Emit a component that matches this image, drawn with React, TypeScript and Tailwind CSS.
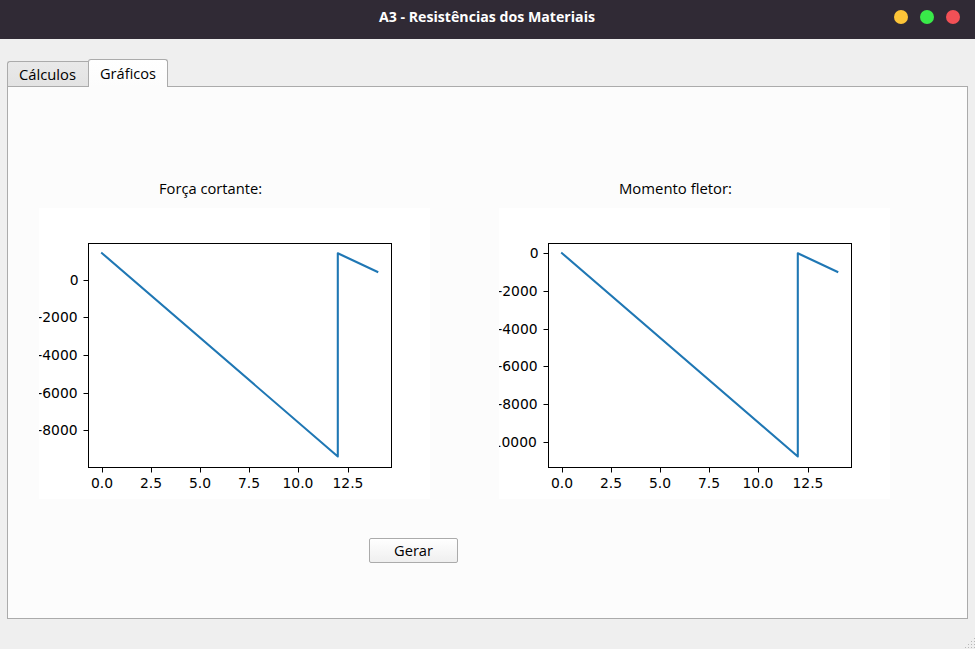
type Tick = { at: number; label: string };

const xTicks: Tick[] = [
  { at: 63.5, label: '0.0' },
  { at: 112.5, label: '2.5' },
  { at: 161.5, label: '5.0' },
  { at: 210.5, label: '7.5' },
  { at: 259.5, label: '10.0' },
  { at: 309.5, label: '12.5' },
];

const shearTicks: Tick[] = [
  { at: 72.5, label: '0' },
  { at: 109.5, label: '-2000' },
  { at: 147.5, label: '-4000' },
  { at: 185.5, label: '-6000' },
  { at: 222.5, label: '-8000' },
];

const momentTicks: Tick[] = [
  { at: 45.5, label: '0' },
  { at: 83.5, label: '-2000' },
  { at: 121.5, label: '-4000' },
  { at: 158.5, label: '-6000' },
  { at: 196.5, label: '-8000' },
  { at: 234.5, label: '-10000' },
];

function Label({ text, width, bold = false }: { text: string; width: number; bold?: boolean }) {
  return (
    <svg width={width} height="20" className="block overflow-visible">
      <text
        x="0"
        y="15"
        fontFamily="'Open Sans', 'Noto Sans', sans-serif"
        fontSize={bold ? 14 : 14.4}
        fontWeight={bold ? 700 : 400}
        fill="currentColor"
        textLength={width}
        lengthAdjust="spacingAndGlyphs"
      >
        {text}
      </text>
    </svg>
  );
}

function Chart({ title, titleWidth, yTicks }: { title: string; titleWidth: number; yTicks: Tick[] }) {
  return (
    <section className="w-[391px]">
      <h2 className="h-[29px] pl-[120px]">
        <Label text={title} width={titleWidth} />
      </h2>
      <svg width="391" height="291" className="block overflow-hidden bg-white" fontFamily="DejaVu Sans, sans-serif" fontSize="13.89">
        <rect x="49.5" y="35.5" width="303" height="224" fill="none" stroke="#000" />
        {xTicks.map((t) => (
          <g key={t.label}>
            <path d={`M${t.at} 260v4.5`} stroke="#000" />
            <text x={t.at - 0.5} y="280" textAnchor="middle">{t.label}</text>
          </g>
        ))}
        {yTicks.map((t) => (
          <g key={t.label}>
            <path d={`M44.5 ${t.at}H49`} stroke="#000" />
            <text x={t.label === '0' ? 39.5 : t.label.length > 5 ? 37.8 : 38.6} y={t.at + 4.8} textAnchor="end">{t.label}</text>
          </g>
        ))}
        <path d="M63 45.2L298.8 248.5V45.2L338.3 63.8" fill="none" stroke="#1f77b4" strokeWidth="2.08" strokeLinejoin="round" strokeLinecap="square" />
      </svg>
    </section>
  );
}

export default function App() {
  return (
    <div className="relative flex h-[649px] w-[975px] flex-col overflow-hidden bg-[#efefef] text-black">
      <header className="grid h-[39px] shrink-0 grid-cols-[1fr_auto_1fr] bg-[#302a35] text-white">
        <span />
        <h1 className="-ml-px pt-[7px]">
          <Label text="A3 - Resistências dos Materiais" width={216} bold />
        </h1>
        <div className="flex justify-end gap-3 pr-[15px] pt-[10px]">
          <span className="size-[14px] rounded-full bg-[#fcc438]" />
          <span className="size-[14px] rounded-full bg-[#39ea49]" />
          <span className="size-[14px] rounded-full bg-[#f25056]" />
        </div>
      </header>

      <nav className="z-10 -mb-px ml-[7px] mt-5 flex h-7 shrink-0 items-end">
        <button className="flex h-[26px] w-[81px] items-start rounded-tl-[3px] border border-r-0 border-[#ababab] bg-gradient-to-b from-[#e9e9e9] to-[#e3e3e3] pl-[11px] pt-[3px]">
          <Label text="Cálculos" width={57} />
        </button>
        <button className="flex h-7 w-20 items-start rounded-t-[3px] border border-b-0 border-[#ababab] bg-gradient-to-b from-white to-[#fcfcfc] pl-[11px] pt-1">
          <Label text="Gráficos" width={56} />
        </button>
      </nav>

      <main className="ml-[7px] h-[533px] w-[961px] shrink-0 border border-[#ababab] bg-[#fcfcfc] pl-[31px] pt-[92px]">
        <div className="flex gap-[69px]">
          <Chart title="Força cortante:" titleWidth={103} yTicks={shearTicks} />
          <Chart title="Momento fletor:" titleWidth={113} yTicks={momentTicks} />
        </div>
        <button className="ml-[330px] mt-[39px] flex h-[25px] w-[89px] justify-center rounded-[2px] border border-[#ababab] bg-gradient-to-b from-white to-[#efefef] pt-[2px]">
          <Label text="Gerar" width={39} />
        </button>
      </main>
      <svg className="absolute bottom-0 right-0" width="12" height="12" fill="#b8b8b8">
        {[[11, 1], [8, 4], [11, 4], [5, 7], [8, 7], [11, 7], [2, 10], [5, 10], [8, 10], [11, 10]].map(([x, y]) => (
          <rect key={`${x}-${y}`} x={x} y={y} width="1" height="1" />
        ))}
      </svg>
    </div>
  );
}
